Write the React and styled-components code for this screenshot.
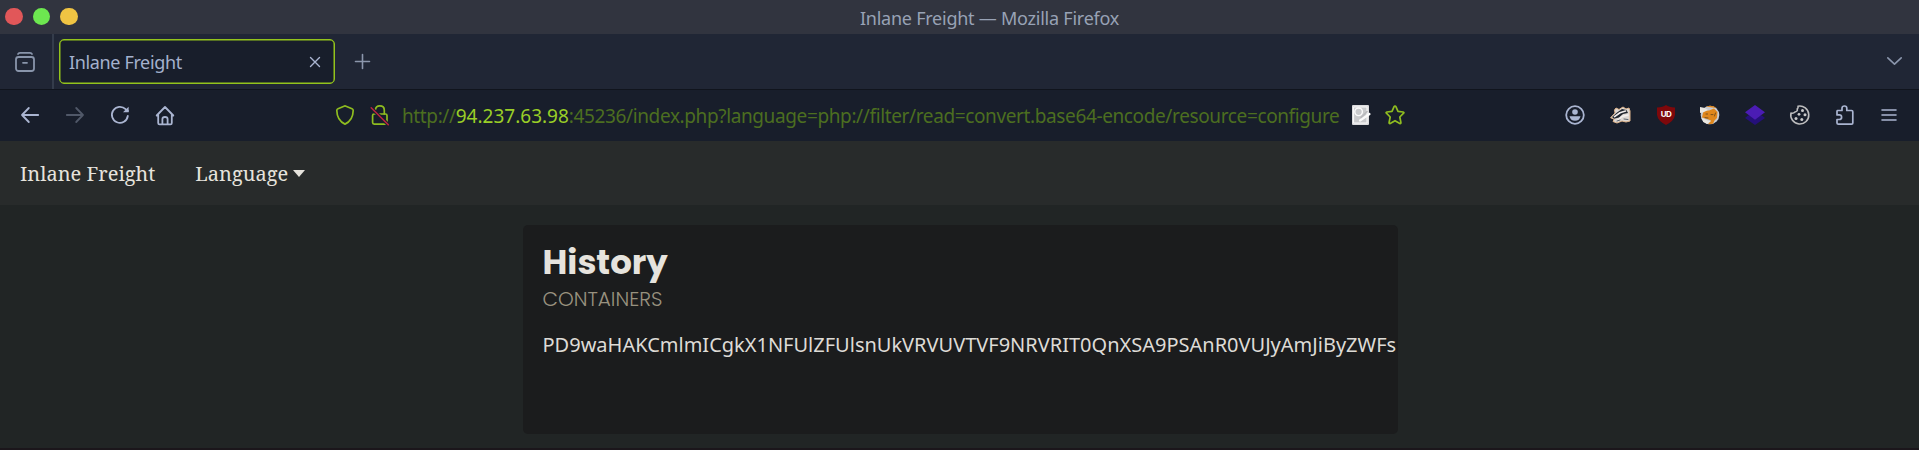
import React from "react";
import styled, { createGlobalStyle } from "styled-components";

const Global = createGlobalStyle`
  * { box-sizing: border-box; }
  body { margin: 0; background: #212525; overflow: hidden; }
`;

const Window = styled.div`
  height: 450px;
  display: flex;
  flex-direction: column;
  font-family: "Noto Sans", sans-serif;
  white-space: nowrap;
  border-bottom: 2px solid #1b161b;
`;

const TitleBar = styled.header`
  height: 34px;
  flex: none;
  display: grid;
  grid-template-columns: 1fr auto 1fr;
  align-items: center;
  background: #31343f;
`;

const Lights = styled.div`
  display: flex;
  gap: 10px;
  padding: 0 0 1px 5px;
`;

const Light = styled.i`
  width: 17.5px;
  height: 17.5px;
  border-radius: 50%;
  background: ${(p) => p.$color};
`;

const WindowTitle = styled.div`
  padding: 1px 0 0 30px;
  margin-right: -30px;
  font-size: 18px;
  line-height: 26px;
  letter-spacing: -0.24px;
  color: #98a2b5;
`;

const TabStrip = styled.div`
  height: 56px;
  flex: none;
  display: flex;
  align-items: center;
  background: #202635;
  border-bottom: 1px solid #10141d;
`;

const TabOverview = styled.div`
  width: 54px;
  height: 55px;
  display: flex;
  align-items: center;
  padding-left: 15px;
  border-right: 2px solid #343c4b;
`;

const Tab = styled.div`
  width: 276px;
  height: 45px;
  margin: 0 0 1px 5px;
  padding: 1px 14px 0 9px;
  display: flex;
  align-items: center;
  justify-content: space-between;
  border: 1px solid #93c31c;
  box-shadow: inset 0 0 0 0.5px #93c31c;
  border-radius: 5px;
  background: #181e2b;
  color: #a4b1cd;
  font-size: 18px;
  letter-spacing: -0.36px;
`;

const NewTab = styled.div`
  margin-left: 19.5px;
  display: flex;
  flex: 1;
`;

const AllTabs = styled.div`
  display: flex;
  padding: 0 17px 2px 0;
`;

const Toolbar = styled.div`
  height: 51px;
  flex: none;
  display: flex;
  align-items: center;
  padding-bottom: 1px;
  background: #181e2b;
`;

const Group = styled.div`
  display: flex;
  flex: none;
  align-items: center;
  gap: ${(p) => p.$gap}px;
  padding-left: ${(p) => p.$start || 0}px;
`;

const Address = styled.div`
  width: 956px;
  flex: none;
  padding: 1px 0 0 14px;
  font-size: 19px;
  line-height: 28px;
  letter-spacing: -0.375px;
  color: #4c6e20;
  b { font-weight: 400; letter-spacing: 0; color: #9ace27; }
`;

const Icon = styled.svg`
  display: block;
  flex: none;
  overflow: visible;
  fill: none;
  stroke: ${(p) => p.$color || "#aab5d1"};
  stroke-width: ${(p) => p.$weight || 1.6};
  stroke-linecap: round;
  stroke-linejoin: round;
`;

const SiteNav = styled.nav`
  height: 64px;
  flex: none;
  display: flex;
  align-items: center;
  gap: 40px;
  padding: 1px 0 0 20px;
  background: #282b2b;
  color: #e6e3dd;
  font: 20px "Noto Serif", "DejaVu Serif", serif;
`;

const Menu = styled.span`
  display: flex;
  align-items: center;
  gap: 5px;
`;

const Caret = styled.i`
  border: 6px solid transparent;
  border-top: 7px solid #e6e3dd;
  border-bottom: 0;
`;

const Page = styled.main`
  flex: 1;
  display: flex;
  justify-content: center;
  align-items: flex-start;
  padding: 20px 0 0 1px;
`;

const Card = styled.article`
  width: 875px;
  height: 209px;
  padding: 15px 0 0 20px;
  border-radius: 5px;
  background: #1b1c1d;
  color: #e6e3dd;
  overflow: hidden;
`;

const Heading = styled.h1`
  margin: 0;
  font: 700 34px/44px Poppins, Inter, sans-serif;
`;

const Sub = styled.div`
  font: 300 20px/30px Poppins, Inter, sans-serif;
  color: #98917f;
`;

const Encoded = styled.p`
  margin: 16px 0 0;
  font-size: 20px;
  line-height: 30px;
  color: #dedbd6;
`;

function Overview() {
  return (
    <Icon width="20" height="20" viewBox="0 0 20 20" $color="#8995ab" $weight="1.8">
      <path d="M3 2Q3.5.8 5 .8H15Q16.5.8 17 2" />
      <rect x="1" y="5" width="18" height="14" rx="2.5" />
      <path d="M8 10.8H12" />
    </Icon>
  );
}

function Account() {
  return (
    <Icon width="20" height="20" viewBox="0 0 20 20" $weight="1.8">
      <circle cx="10" cy="10" r="8.8" />
      <circle cx="10" cy="7" r="2.8" fill="#aab5d1" stroke="none" />
      <path d="M4.5 11.2h11q-1 4.6-5.5 4.6t-5.5-4.6Z" fill="#aab5d1" stroke="none" />
    </Icon>
  );
}

function Badger() {
  return (
    <Icon width="21" height="18" viewBox="0 0 21 18" $color="#dfb58d" $weight="1">
      <path d="M.8 11.5 5 7 4.5 4 6 2 9 3.5 13 1 16 3 19 2 20 5 20 9 20 15 16 16 12 15 7 17 3 15.5 4 13.5Z" fill="#ddd8d4" />
      <path d="M2 11 7 6.5 12 3 16.5 4 18 7 13 8 9 11.5 4 12.8Z" fill="#20252d" stroke="none" />
      <path d="M4.5 10.6 10 6.8 15.5 5" stroke="#f2eeee" strokeWidth="1.7" />
      <path d="M8 14 12 10.5 18 9" stroke="#f2eeee" strokeWidth="1.6" />
      <path d="M7 15 10 14M14 13 18 13.5" stroke="#59616b" />
    </Icon>
  );
}

const ShieldLabel = styled.text`
  font: 700 8px Inter, sans-serif;
  letter-spacing: -0.6px;
  fill: #fff;
  stroke: none;
`;

function Blocker() {
  return (
    <Icon width="18" height="20" viewBox="0 0 18 20">
      <path d="M9 0Q12 2.3 18 2.4V10Q17 16 9 20Q1 16 0 10V2.4Q6 2.3 9 0Z" fill="#7e080b" stroke="none" />
      <ShieldLabel x="3.8" y="11.5">UD</ShieldLabel>
    </Icon>
  );
}

function Fox() {
  return (
    <Icon width="20" height="20" viewBox="0 0 20 20" $weight="1">
      <circle cx="10" cy="10" r="9.3" fill="#c9cbd0" stroke="none" />
      <path d="M4 5.5 9 5.5 14 3.5 17.5 7 17 13 14.5 15.5 13 18.8 8 19.2 11 15.5 7 14 2 12.5 3 8Z" fill="#e0871c" stroke="none" />
      <path d="M6 1.6Q12 -.8 16.5 3L12 2.6Z" fill="#e0871c" stroke="none" />
      <path d="M0 2V8L4 7 8 5 5 3Z" fill="#e9e6e0" stroke="none" />
      <path d="M1.5 12.8 7 15.3 11 16 7 19 3.2 17Z" fill="#e9e6e0" stroke="none" />
      <path d="M6 9H7.5M11 9.6H13M5 12.6 8 13M15.5 8 14.5 11" stroke="#7a501c" />
    </Icon>
  );
}

function Layers() {
  return (
    <Icon width="20" height="20" viewBox="0 0 20 20">
      <path d="M0 13 3 10.5H17L20 13 10 20Z" fill="#25107a" stroke="none" />
      <path d="M10 0 20 7.2 10 14.8 0 7.2Z" fill="#4b1cb4" stroke="none" />
    </Icon>
  );
}

function Cookie() {
  return (
    <Icon width="20" height="20" viewBox="0 0 20 20" $color="#bdbdbe" $weight="1.6">
      <path d="M8 1.2A9 9 0 1 1 1 8Q3.5 8.7 5 7 8 6.2 7.2 4Q8.5 3 8 1.2Z" />
      <g fill="#c9c9ca" stroke="none">
        <circle cx="12.5" cy="5.4" r="1.5" />
        <circle cx="9" cy="9.3" r="1.4" />
        <circle cx="15" cy="9.8" r="1.5" />
        <circle cx="6" cy="13.4" r="1.5" />
        <circle cx="11.8" cy="14.5" r="1.5" />
      </g>
    </Icon>
  );
}

export default function App() {
  return (
    <Window>
      <Global />
      <TitleBar>
        <Lights>
          <Light $color="#e15759" />
          <Light $color="#6de750" />
          <Light $color="#f0c443" />
        </Lights>
        <WindowTitle>Inlane Freight — Mozilla Firefox</WindowTitle>
      </TitleBar>
      <TabStrip>
        <TabOverview><Overview /></TabOverview>
        <Tab>
          <span>Inlane Freight</span>
          <Icon width="10" height="10" viewBox="0 0 10 10" $weight="1.4"><path d="m.5.5 9 9m0-9-9 9" /></Icon>
        </Tab>
        <NewTab>
          <Icon width="15" height="15" viewBox="0 0 15 15" $color="#8b96ac"><path d="M7.5.5v14M.5 7.5h14" /></Icon>
        </NewTab>
        <AllTabs>
          <Icon width="15" height="8" viewBox="0 0 15 8" $color="#8b96ac"><path d="m.8.8 6.7 6.4L14.2.8" /></Icon>
        </AllTabs>
      </TabStrip>
      <Toolbar>
        <Group $gap="27" $start="21">
          <Icon width="18" height="16" viewBox="0 0 18 16" $weight="1.8"><path d="M17.2 8H1m6.8-7L1 8l6.8 7" /></Icon>
          <Icon width="18" height="16" viewBox="0 0 18 16" $color="#505868" $weight="1.8"><path d="M.8 8H17m-6.8-7L17 8l-6.8 7" /></Icon>
          <Icon width="18" height="18" viewBox="0 0 18 18" $weight="1.8">
            <path d="M16.8 10A8 8 0 1 1 14.6 3.2L17 5" />
            <path d="M17.6.8V6.2H12Z" fill="#aab5d1" stroke="none" />
          </Icon>
          <Icon width="18" height="19" viewBox="0 0 18 19" $weight="1.8">
            <path d="M.7 9.5 9 1l8.3 8.5M2.2 8.6V17q0 1.4 1.4 1.4H14.4q1.4 0 1.4-1.4V8.6M6.4 18.2V13q0-2 2.6-2t2.6 2v5.2" />
          </Icon>
        </Group>
        <Group $gap="17" $start="162">
          <Icon width="18" height="20" viewBox="0 0 18 20" $color="#8fbd20" $weight="1.7">
            <path d="M9 .9Q9.5.9 10 1.3L16 3.8Q17.2 4.3 17.2 5.5 17 15.5 9 19.1 1 15.5.8 5.5.8 4.3 2 3.8L8 1.3Q8.5.9 9 .9Z" />
          </Icon>
          <Icon width="17" height="20" viewBox="0 0 17 20" $color="#8fbd20" $weight="1.7">
            <rect x="1.6" y="9" width="14.4" height="10.2" rx="1.6" />
            <path d="M4.3 5Q4.8.9 8.8.9 13.3.9 13.3 5.2V9" />
            <path d="M.2 2.8 17.3 19.8" stroke="#181e2b" strokeWidth="3.5" />
            <path d="M.2 2.8 17.3 19.8" stroke="#bd2442" strokeWidth="1.5" />
          </Icon>
        </Group>
        <Address>http://<b>94.237.63.98</b>:45236/index.php?language=php://filter/read=convert.base64-encode/resource=configure</Address>
        <Group $gap="15" $start="8">
          <Icon width="18" height="20" viewBox="0 0 18 20" $color="#fafafa">
            <rect x="0" y="0" width="17" height="20" rx="1" fill="#dcdcde" stroke="none" />
            <path d="M2 2H15V18H2Z" fill="#c9cacc" strokeWidth="1" />
            <circle cx="6.6" cy="6.8" r="3.8" strokeWidth="1.4" />
            <path d="M8 15.5 17.5 9" strokeWidth="2.2" />
            <path d="M9 12.5 15 6.5" stroke="#b7b8ba" />
          </Icon>
          <Icon width="20" height="20" viewBox="0 0 20 20" $color="#8fbd20" $weight="1.7">
            <path d="M10 1q.6 0 .9.7l2.1 4.7 5.2.6q1.2.3.4 1.2L14.8 12l1.1 5.5q.1 1.4-1.1.9L10 15.7 5.2 18.4q-1.2.5-1.1-.9L5.2 12 1.4 8.2Q.6 7.3 1.8 7L7 6.4 9.1 1.7Q9.4 1 10 1Z" />
          </Icon>
        </Group>
        <Group $gap="25.3" $start="160">
          <Account />
          <Badger />
          <Blocker />
          <Fox />
          <Layers />
          <Cookie />
          <Icon width="18" height="20" viewBox="0 0 18 20" $weight="1.7">
            <path d="M1.4 5.5H6V3.2Q6 1 8.4 1t2.4 2.2V5.5H15.6Q16.8 5.5 16.8 6.7V18Q16.8 19.2 15.6 19.2H2.4Q1 19.2 1 18V14.5H3.2Q5.6 14.5 5.6 12.2T3.2 9.9H1V6.3Z" />
          </Icon>
          <Icon width="18" height="12" viewBox="0 0 18 12"><path d="M3 1H17M3 6H17M3 11H17" /></Icon>
        </Group>
      </Toolbar>
      <SiteNav>
        <span>Inlane Freight</span>
        <Menu><span>Language</span><Caret /></Menu>
      </SiteNav>
      <Page>
        <Card>
          <Heading>History</Heading>
          <Sub>CONTAINERS</Sub>
          <Encoded>PD9waHAKCmlmICgkX1NFUlZFUlsnUkVRVUVTVF9NRVRIT0QnXSA9PSAnR0VUJyAmJiByZWFs</Encoded>
        </Card>
      </Page>
    </Window>
  );
}
